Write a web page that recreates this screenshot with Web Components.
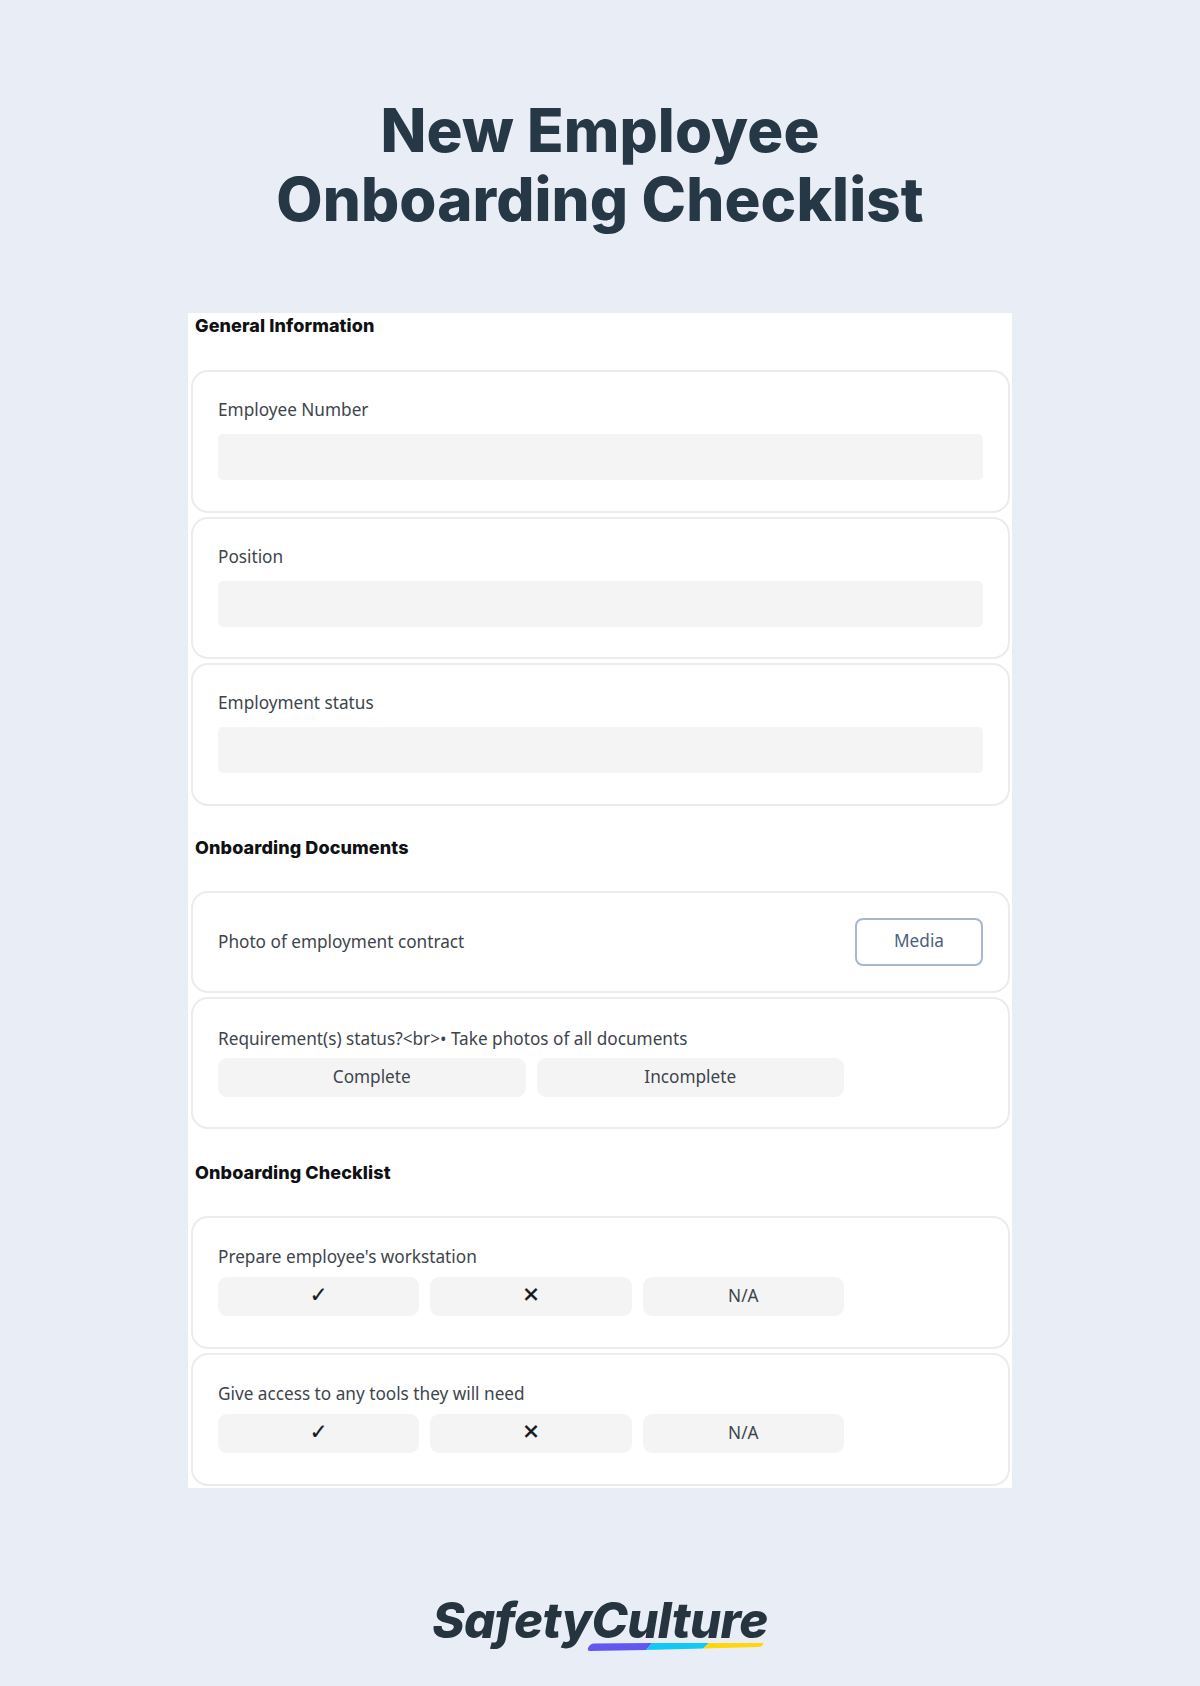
<!DOCTYPE html>
<html lang="en">
<head>
<meta charset="utf-8">
<title>New Employee Onboarding Checklist</title>
<style>
    html, body { margin: 0; background: #e9eef6; }
    body { font-family: "Noto Sans", "Open Sans", sans-serif; }
</style>
</head>
<body>
<onboarding-page>
    <page-title>New Employee<br>Onboarding Checklist</page-title>
    <form-panel>
        <section-heading first>General Information</section-heading>
        <text-field label="Employee Number"></text-field>
        <text-field label="Position"></text-field>
        <text-field label="Employment status"></text-field>
        <section-heading style="margin-bottom: 26.5px">Onboarding Documents</section-heading>
        <media-field label="Photo of employment contract"></media-field>
        <choice-field label="Requirement(s) status?&lt;br&gt;• Take photos of all documents" options="Complete|Incomplete"></choice-field>
        <section-heading style="padding-top: 27px; margin-bottom: 26px">Onboarding Checklist</section-heading>
        <choice-field check label="Prepare employee's workstation" options="✓|✕|N/A"></choice-field>
        <choice-field check label="Give access to any tools they will need" options="✓|✕|N/A"></choice-field>
    </form-panel>
    <brand-logo></brand-logo>
</onboarding-page>

<script>
class OnboardingPage extends HTMLElement {
    constructor(){
        super();
        this.attachShadow({ mode: 'open' });
        this.shadowRoot.innerHTML = `
        <style>
            :host { display: flex; flex-direction: column; align-items: center; height: 1686px; overflow: hidden; }
        </style>
        <slot></slot>`;
    }
}

class PageTitle extends HTMLElement {
    constructor(){
        super();
        this.attachShadow({ mode: 'open' });
        this.shadowRoot.innerHTML = `
        <style>
            :host {
                display: block;
                box-sizing: border-box;
                width: 100%;
                height: 313px;
                padding-top: 96px;
                text-align: center;
                font: 800 60px/69px Inter, "Liberation Sans", sans-serif;
                letter-spacing: 0.1px;
                color: #263746;
            }
        </style>
        <slot></slot>`;
    }
}

class FormPanel extends HTMLElement {
    constructor(){
        super();
        this.attachShadow({ mode: 'open' });
        this.shadowRoot.innerHTML = `
        <style>
            :host {
                display: flex;
                flex-direction: column;
                gap: 4px;
                box-sizing: border-box;
                width: 824px;
                height: 1175px;
                padding: 0 2px 0 3px;
                background: #fff;
            }
        </style>
        <slot></slot>`;
    }
}

class SectionHeading extends HTMLElement {
    constructor(){
        super();
        this.attachShadow({ mode: 'open' });
        this.shadowRoot.innerHTML = `
        <style>
            :host {
                display: block;
                margin-bottom: 28px;
                padding: 25px 0 0 4px;
                font: 800 18px/26px Inter, "Liberation Sans", sans-serif;
                letter-spacing: 0.1px;
                color: #0f1114;
            }
            :host([first]) { padding-top: 0; margin-bottom: 27px; }
        </style>
        <slot></slot>`;
    }
}

const cardStyles = `
    :host {
        display: block;
        box-sizing: border-box;
        padding: 25px 25px 30px 25px;
        border: 2px solid #ececee;
        border-radius: 17px;
        background: #fff;
        font: 400 17.2px/26px "Noto Sans", "Open Sans", sans-serif;
        color: #3d444c;
    }
    .label { display: block; }
`;

class TextField extends HTMLElement {
    constructor(){
        super();
        this.attachShadow({ mode: 'open' });
        this.shadowRoot.innerHTML = `
        <style>
            ${cardStyles}
            :host { padding-bottom: 30.5px; }
            .input { height: 46px; margin-top: 11px; border-radius: 5px; background: #f4f4f4; }
        </style>
        <span class="label"></span>
        <div class="input"></div>`;
    }
    connectedCallback(){
        this.shadowRoot.querySelector('.label').textContent = this.getAttribute('label');
    }
}

class MediaField extends HTMLElement {
    constructor(){
        super();
        this.attachShadow({ mode: 'open' });
        this.shadowRoot.innerHTML = `
        <style>
            ${cardStyles}
            :host { display: flex; align-items: center; justify-content: space-between; padding: 25px; }
            .media {
                display: flex;
                align-items: center;
                justify-content: center;
                box-sizing: border-box;
                width: 128px;
                height: 48px;
                padding-bottom: 2px;
                border: 2px solid #a9b6cf;
                border-radius: 8px;
                color: #4d5f7c;
            }
        </style>
        <span class="label"></span>
        <div class="media">Media</div>`;
    }
    connectedCallback(){
        this.shadowRoot.querySelector('.label').textContent = this.getAttribute('label');
    }
}

class ChoiceField extends HTMLElement {
    constructor(){
        super();
        this.attachShadow({ mode: 'open' });
        this.shadowRoot.innerHTML = `
        <style>
            ${cardStyles}
            :host { padding-top: 27px; }
            :host([check]) { padding-top: 26px; padding-bottom: 31px; }
            .options { display: flex; gap: 11px; width: 626px; margin-top: 6px; }
            :host([check]) .options { margin-top: 7px; }
            .options div {
                flex: 1;
                display: flex;
                align-items: center;
                justify-content: center;
                box-sizing: border-box;
                height: 39px;
                padding-bottom: 2px;
                border-radius: 9px;
                background: #f4f4f4;
            }
            .options .glyph {
                padding-bottom: 2px;
                font: 700 21px/1 "DejaVu Sans", sans-serif;
                -webkit-text-stroke: 0.3px #14181c;
                color: #14181c;
            }
        </style>
        <span class="label"></span>
        <div class="options"></div>`;
    }
    connectedCallback(){
        this.shadowRoot.querySelector('.label').textContent = this.getAttribute('label');
        const options = this.shadowRoot.querySelector('.options');
        this.getAttribute('options').split('|').forEach(text => {
            const option = document.createElement('div');
            option.textContent = text;
            if (text === '✓' || text === '✕') option.className = 'glyph';
            options.appendChild(option);
        });
    }
}

class BrandLogo extends HTMLElement {
    constructor(){
        super();
        this.attachShadow({ mode: 'open' });
        this.shadowRoot.innerHTML = `
        <style>
            :host { display: block; position: relative; width: 340px; margin-top: 100px; height: 70px; }
            .word {
                display: block;
                text-align: center;
                font: italic 800 49px/66px Inter, "Liberation Sans", sans-serif;
                letter-spacing: -0.6px;
                color: #263440;
            }
            svg { position: absolute; left: 0; top: 0; }
        </style>
        <span class="word">SafetyCulture</span>
        <svg width="340" height="70" viewBox="0 0 340 70" aria-hidden="true">
            <path d="M158 60 Q160 55.500 164 55.500 L222 55 L216 62 L160 63 Q157 63 158 60Z" fill="#6457f0"/>
            <path d="M222 55 L279 55 L273 60.500 L216 62Z" fill="#12c8f5"/>
            <path d="M279 55 L333 55 Q334 55 332.500 57 Q331.500 59 329 59 L273 60.500Z" fill="#ffd60a"/>
        </svg>`;
    }
}

customElements.define('onboarding-page', OnboardingPage);
customElements.define('page-title', PageTitle);
customElements.define('form-panel', FormPanel);
customElements.define('section-heading', SectionHeading);
customElements.define('text-field', TextField);
customElements.define('media-field', MediaField);
customElements.define('choice-field', ChoiceField);
customElements.define('brand-logo', BrandLogo);
</script>
</body>
</html>
